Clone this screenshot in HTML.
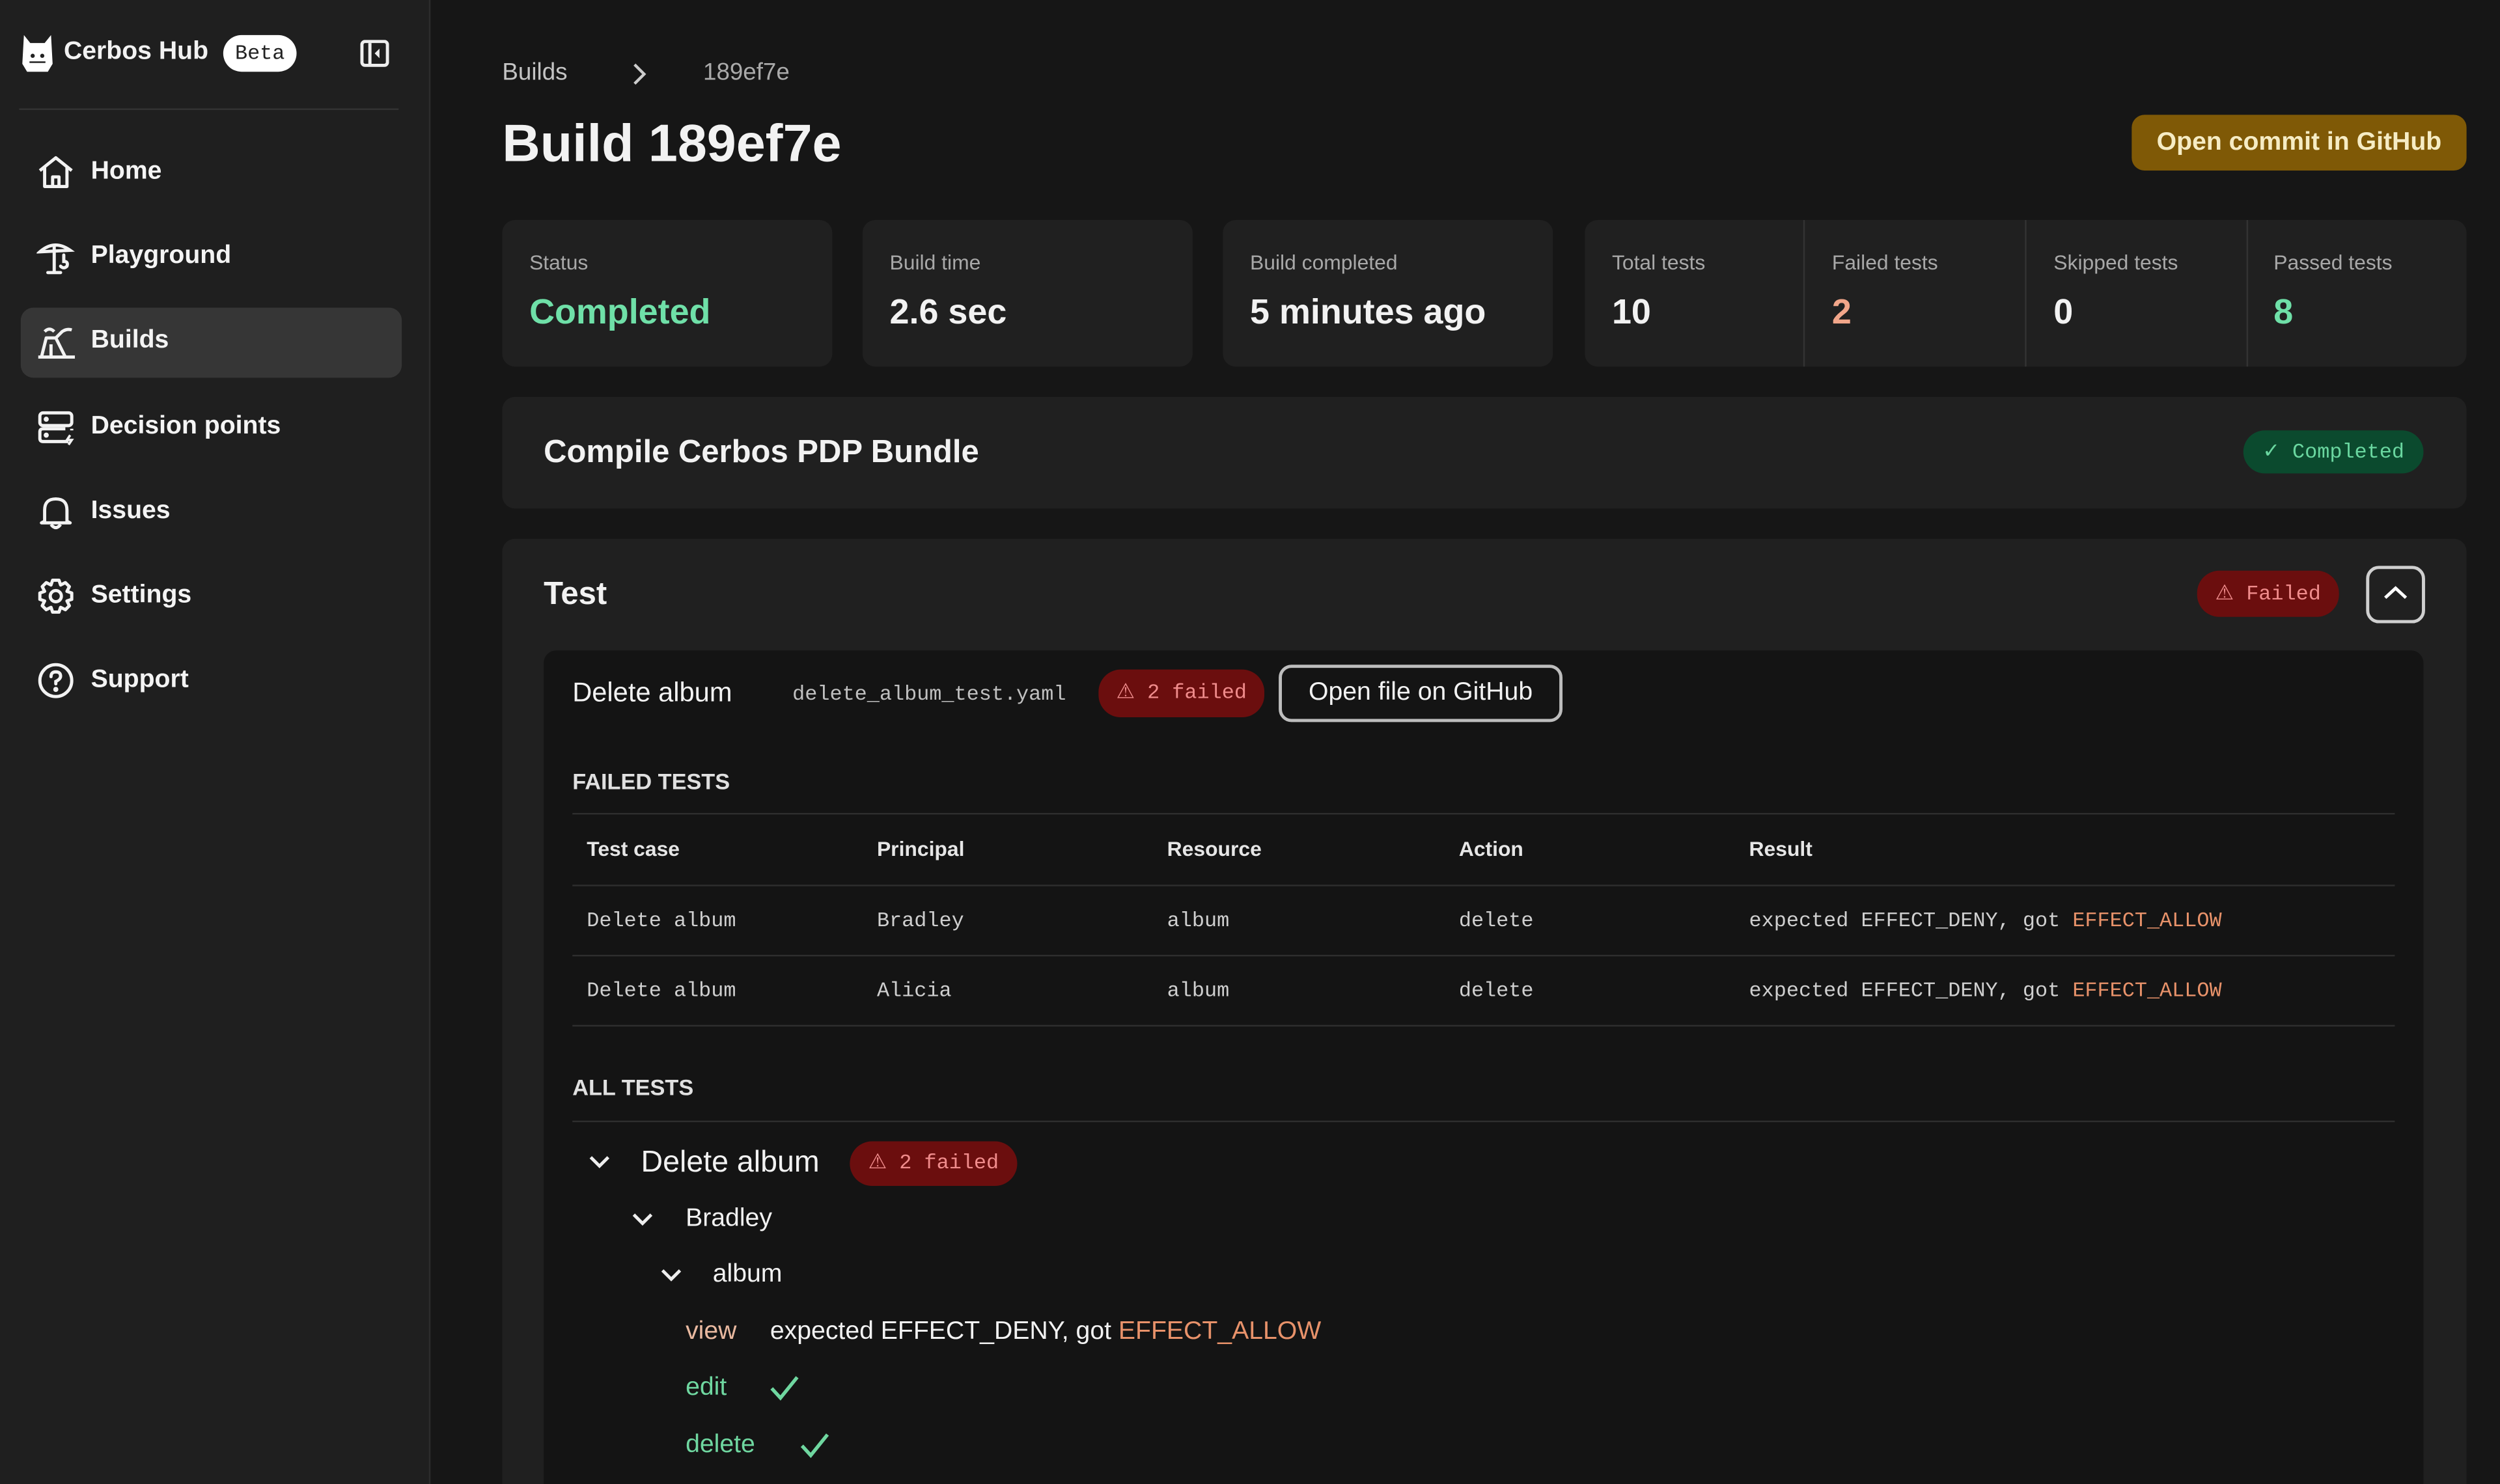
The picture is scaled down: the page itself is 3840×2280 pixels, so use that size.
<!DOCTYPE html>
<html><head><meta charset="utf-8">
<style>
html,body{margin:0;padding:0;background:#161616;width:3840px;height:2279px;overflow:hidden}
#s{position:absolute;left:0;top:0;width:1568px;height:931px;transform:scale(2.449);transform-origin:0 0;font-family:"Liberation Sans",sans-serif;color:#f2f2f2;background:#161616;overflow:hidden}
.a{position:absolute;white-space:nowrap}
.m{font-family:"Liberation Mono",monospace}
.b{font-weight:bold}
.card{position:absolute;background:#202020;border-radius:8px}
.lbl{position:absolute;font-size:13px;color:#a8a8a8;line-height:16px}
.val{position:absolute;font-size:22px;font-weight:bold;line-height:26px}
.nav{position:absolute;left:57px;font-size:16px;font-weight:bold;line-height:20px;color:#f4f4f4}
.ic{position:absolute;left:23px;width:24px;height:24px}
.th{position:absolute;top:525px;font-size:13px;font-weight:bold;line-height:16px;color:#e6e6e6}
.td{position:absolute;font-size:13px;line-height:16px;color:#cfcfcf;font-family:"Liberation Mono",monospace}
.hl{position:absolute;left:359px;width:1143px;height:1px;background:#2e2e2e}
.or{color:#e8926a}
</style></head><body><div id="s">
<!-- sidebar -->
<div class="a" style="left:0;top:0;width:269px;height:931px;background:#1f1f1f;border-right:1px solid #2c2c2c"></div>
<svg class="a" style="left:13px;top:20px" width="21" height="27" viewBox="0 0 21 27"><path d="M2 2 L6 7 L15 7 L19 2 L20 20 L17 25 L4 25 L1 20 Z" fill="#fff"/><circle cx="7.5" cy="15" r="1.3" fill="#222"/><circle cx="13.5" cy="15" r="1.3" fill="#222"/><path d="M5.5 19 H15.5" stroke="#222" stroke-width="1"/></svg>
<div class="a b" style="left:40px;top:24px;font-size:16px;line-height:18px">Cerbos Hub</div>
<div class="a m" style="left:140px;top:22px;width:46px;height:23px;border-radius:12px;background:#fff;color:#222;font-size:13px;line-height:23px;text-align:center">Beta</div>
<svg class="a" style="left:226px;top:25px" width="18" height="17" viewBox="0 0 18 17"><rect x="1" y="1" width="16" height="15" rx="2" fill="none" stroke="#eee" stroke-width="2"/><path d="M6 2V15" stroke="#eee" stroke-width="2"/><path d="M12 5.5L9 8.5L12 11.5Z" fill="#eee"/></svg>
<div class="a" style="left:12px;top:68px;width:238px;height:1px;background:#333"></div>
<div class="a" style="left:13px;top:193px;width:239px;height:44px;border-radius:8px;background:#363636"></div>
<svg class="ic" style="top:96px" viewBox="0 0 24 24" fill="none" stroke="#f2f2f2" stroke-width="2" stroke-linejoin="round"><path d="M2 11 L12 3 L22 11"/><path d="M5 9 V21 H19 V9"/><path d="M10 21 V15 H14 V21"/></svg>
<div class="nav" style="top:98px">Home</div>
<svg class="ic" style="top:149px" viewBox="0 0 24 24" fill="none" stroke="#f2f2f2" stroke-width="2" stroke-linecap="round"><path d="M2 9 Q11 1 21 8 Z"/><path d="M11 5 V22 M7 22 H15"/><path d="M17 11 V15 Q20 15 19 18 Q17 20 15 18"/></svg>
<div class="nav" style="top:151px">Playground</div>
<svg class="ic" style="top:202px" viewBox="0 0 24 24" fill="none" stroke="#f2f2f2" stroke-width="2" stroke-linejoin="round"><path d="M1 22 H24"/><path d="M3 22 L6 10 L12 10 L18 22"/><path d="M9 22 L9 14"/><path d="M12 10 L16 6 Q19 4 22 5"/><path d="M5 6 Q8 3 11 6"/></svg>
<div class="nav" style="top:204px">Builds</div>
<svg class="ic" style="top:256px" viewBox="0 0 24 24" fill="none" stroke="#f2f2f2" stroke-width="2"><rect x="2" y="3" width="20" height="8" rx="2"/><path d="M22 14 V13 M20 21 H4 Q2 21 2 19 V15 Q2 13 4 13 H18"/><circle cx="6" cy="7" r="0.6" fill="#f2f2f2"/><circle cx="6" cy="17" r="0.6" fill="#f2f2f2"/><path d="M21 17 L19 20 L22 20 L20 23" stroke-width="1.5"/></svg>
<div class="nav" style="top:258px">Decision points</div>
<svg class="ic" style="top:309px" viewBox="0 0 24 24" fill="none" stroke="#f2f2f2" stroke-width="2" stroke-linejoin="round"><path d="M5 18 V11 Q5 4 12 4 Q19 4 19 11 V18 L21 19 H3 Z"/><path d="M9 20 Q12 24 15 20"/></svg>
<div class="nav" style="top:311px">Issues</div>
<svg class="ic" style="top:362px" viewBox="0 0 24 24" fill="none" stroke="#f2f2f2" stroke-width="2" stroke-linejoin="round"><path d="M10 2 H14 L15 5 L18 3.5 L20.5 6 L19 9 L22 10 V14 L19 15 L20.5 18 L18 20.5 L15 19 L14 22 H10 L9 19 L6 20.5 L3.5 18 L5 15 L2 14 V10 L5 9 L3.5 6 L6 3.5 L9 5 Z"/><circle cx="12" cy="12" r="3.5"/></svg>
<div class="nav" style="top:364px">Settings</div>
<svg class="ic" style="top:415px" viewBox="0 0 24 24" fill="none" stroke="#f2f2f2" stroke-width="2" stroke-linecap="round"><circle cx="12" cy="12" r="10"/><path d="M9 9.5 Q9 6.5 12 6.5 Q15 6.5 15 9.2 Q15 11 12 12.5 V14"/><circle cx="12" cy="17.5" r="0.6" fill="#f2f2f2"/></svg>
<div class="nav" style="top:417px">Support</div>

<!-- header -->
<div class="a" style="left:315px;top:37px;font-size:15px;line-height:18px;color:#c4c4c4">Builds</div>
<svg class="a" style="left:395px;top:39px" width="12" height="15" viewBox="0 0 12 15"><path d="M3 1.5 L9 7.5 L3 13.5" fill="none" stroke="#ccc" stroke-width="1.8"/></svg>
<div class="a" style="left:441px;top:37px;font-size:15px;line-height:18px;color:#aaa">189ef7e</div>
<div class="a b" style="left:315px;top:71px;font-size:33px;line-height:38px">Build 189ef7e</div>
<div class="a b" style="left:1337px;top:72px;width:210px;height:35px;border-radius:8px;background:#7f5906;color:#f6ecc4;font-size:16px;line-height:35px;text-align:center">Open commit in GitHub</div>

<!-- stats -->
<div class="card" style="left:315px;top:138px;width:207px;height:92px"></div>
<div class="card" style="left:541px;top:138px;width:207px;height:92px"></div>
<div class="card" style="left:767px;top:138px;width:207px;height:92px"></div>
<div class="card" style="left:994px;top:138px;width:553px;height:92px"></div>
<div class="a" style="left:1131px;top:138px;width:1px;height:92px;background:#333"></div>
<div class="a" style="left:1270px;top:138px;width:1px;height:92px;background:#333"></div>
<div class="a" style="left:1409px;top:138px;width:1px;height:92px;background:#333"></div>
<div class="lbl" style="left:332px;top:157px">Status</div><div class="val" style="left:332px;top:183px;color:#6fe0a8">Completed</div>
<div class="lbl" style="left:558px;top:157px">Build time</div><div class="val" style="left:558px;top:183px">2.6 sec</div>
<div class="lbl" style="left:784px;top:157px">Build completed</div><div class="val" style="left:784px;top:183px">5 minutes ago</div>
<div class="lbl" style="left:1011px;top:157px">Total tests</div><div class="val" style="left:1011px;top:183px">10</div>
<div class="lbl" style="left:1149px;top:157px">Failed tests</div><div class="val" style="left:1149px;top:183px;color:#f2a68a">2</div>
<div class="lbl" style="left:1288px;top:157px">Skipped tests</div><div class="val" style="left:1288px;top:183px">0</div>
<div class="lbl" style="left:1426px;top:157px">Passed tests</div><div class="val" style="left:1426px;top:183px;color:#6fe0a8">8</div>

<!-- compile -->
<div class="card" style="left:315px;top:249px;width:1232px;height:70px"></div>
<div class="a b" style="left:341px;top:272px;font-size:20px;line-height:24px">Compile Cerbos PDP Bundle</div>
<div class="a m" style="left:1407px;top:270px;width:113px;height:27px;border-radius:14px;background:#0b4a2e;color:#6ad7a0;font-size:13px;line-height:27px;text-align:center">✓ Completed</div>

<!-- test -->
<div class="card" style="left:315px;top:338px;width:1232px;height:620px"></div>
<div class="a b" style="left:341px;top:361px;font-size:20px;line-height:24px">Test</div>
<div class="a m" style="left:1378px;top:358px;width:89px;height:29px;border-radius:14px;background:#6b0e0e;color:#f08c8c;font-size:13px;line-height:29px;text-align:center">⚠ Failed</div>
<div class="a" style="left:1484px;top:355px;width:33px;height:32px;border:2px solid #cfcfcf;border-radius:8px"></div>
<svg class="a" style="left:1494px;top:366px" width="17" height="12" viewBox="0 0 17 12"><path d="M2 9 L8.5 3 L15 9" fill="none" stroke="#fff" stroke-width="2"/></svg>

<div class="a" style="left:341px;top:408px;width:1179px;height:530px;background:#141414;border-radius:8px"></div>
<div class="a" style="left:359px;top:425px;font-size:17px;line-height:20px">Delete album</div>
<div class="a m" style="left:497px;top:428px;font-size:13px;line-height:16px;color:#c0c0c0">delete_album_test.yaml</div>
<div class="a m" style="left:689px;top:420px;width:104px;height:30px;border-radius:14px;background:#6b0e0e;color:#f08c8c;font-size:13px;line-height:30px;text-align:center">⚠ 2 failed</div>
<div class="a" style="left:802px;top:417px;width:174px;height:32px;border:2px solid #bdbdbd;border-radius:8px;font-size:16px;line-height:32px;text-align:center">Open file on GitHub</div>

<div class="a b" style="left:359px;top:482px;font-size:14px;line-height:16px;color:#e0e0e0">FAILED TESTS</div>
<div class="hl" style="top:510px"></div>
<div class="th" style="left:368px">Test case</div><div class="th" style="left:550px">Principal</div><div class="th" style="left:732px">Resource</div><div class="th" style="left:915px">Action</div><div class="th" style="left:1097px">Result</div>
<div class="hl" style="top:555px"></div>
<div class="td" style="left:368px;top:570px">Delete album</div><div class="td" style="left:550px;top:570px">Bradley</div><div class="td" style="left:732px;top:570px">album</div><div class="td" style="left:915px;top:570px">delete</div><div class="td" style="left:1097px;top:570px">expected EFFECT_DENY, got <span class="or">EFFECT_ALLOW</span></div>
<div class="hl" style="top:599px"></div>
<div class="td" style="left:368px;top:614px">Delete album</div><div class="td" style="left:550px;top:614px">Alicia</div><div class="td" style="left:732px;top:614px">album</div><div class="td" style="left:915px;top:614px">delete</div><div class="td" style="left:1097px;top:614px">expected EFFECT_DENY, got <span class="or">EFFECT_ALLOW</span></div>
<div class="hl" style="top:643px"></div>

<div class="a b" style="left:359px;top:674px;font-size:14px;line-height:16px;color:#e0e0e0">ALL TESTS</div>
<div class="hl" style="top:703px"></div>

<svg class="a" style="left:369px;top:724px" width="14" height="10" viewBox="0 0 14 10"><path d="M1.5 2 L7 7.5 L12.5 2" fill="none" stroke="#eee" stroke-width="2"/></svg>
<div class="a" style="left:402px;top:719px;font-size:19px;line-height:22px">Delete album</div>
<div class="a m" style="left:533px;top:716px;width:105px;height:28px;border-radius:14px;background:#6b0e0e;color:#f08c8c;font-size:13px;line-height:28px;text-align:center">⚠ 2 failed</div>
<svg class="a" style="left:396px;top:760px" width="14" height="10" viewBox="0 0 14 10"><path d="M1.5 2 L7 7.5 L12.5 2" fill="none" stroke="#eee" stroke-width="2"/></svg>
<div class="a" style="left:430px;top:755px;font-size:16px;line-height:20px">Bradley</div>
<svg class="a" style="left:414px;top:795px" width="14" height="10" viewBox="0 0 14 10"><path d="M1.5 2 L7 7.5 L12.5 2" fill="none" stroke="#eee" stroke-width="2"/></svg>
<div class="a" style="left:447px;top:790px;font-size:16px;line-height:20px">album</div>
<div class="a" style="left:430px;top:826px;font-size:16px;line-height:20px;color:#e9b9a0">view</div>
<div class="a" style="left:483px;top:826px;font-size:16px;line-height:20px">expected EFFECT_DENY, got <span class="or">EFFECT_ALLOW</span></div>
<div class="a" style="left:430px;top:861px;font-size:16px;line-height:20px;color:#6fd7a0">edit</div>
<svg class="a" style="left:482px;top:862px" width="20" height="18" viewBox="0 0 20 18"><path d="M2 9 L7.5 15 L18 2" fill="none" stroke="#6fd7a0" stroke-width="2.2"/></svg>
<div class="a" style="left:430px;top:897px;font-size:16px;line-height:20px;color:#6fd7a0">delete</div>
<svg class="a" style="left:501px;top:898px" width="20" height="18" viewBox="0 0 20 18"><path d="M2 9 L7.5 15 L18 2" fill="none" stroke="#6fd7a0" stroke-width="2.2"/></svg>
</div></body></html>
